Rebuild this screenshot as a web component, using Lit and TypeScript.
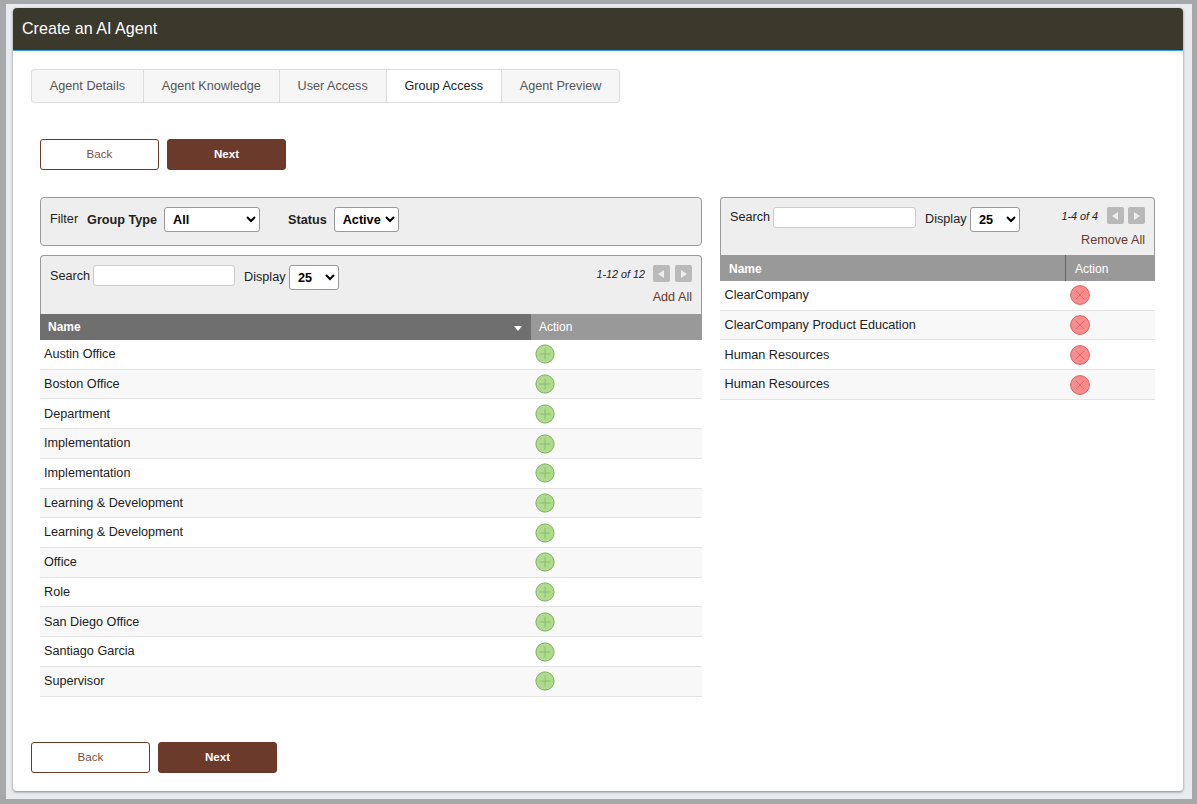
import { LitElement, html, css } from 'lit'
import { customElement, property } from 'lit/decorators.js'

const available = [
  'Austin Office',
  'Boston Office',
  'Department',
  'Implementation',
  'Implementation',
  'Learning & Development',
  'Learning & Development',
  'Office',
  'Role',
  'San Diego Office',
  'Santiago Garcia',
  'Supervisor'
]

const assigned = [
  'ClearCompany',
  'ClearCompany Product Education',
  'Human Resources',
  'Human Resources'
]

const tabs = ['Agent Details', 'Agent Knowledge', 'User Access', 'Group Access', 'Agent Preview']

const plusIcon = html`<svg width="20" height="20" viewBox="0 0 20 20">
  <circle cx="10" cy="10" r="9.1" fill="#aedb8c" stroke="#7dae62" />
  <path d="M10 4.6v10.8M4.6 10h10.8" stroke="#86b56a" stroke-width="0.8" fill="none" />
</svg>`

const crossIcon = html`<svg width="20" height="20" viewBox="0 0 20 20">
  <circle cx="10" cy="10" r="9.4" fill="#f98d8d" stroke="#d9605f" />
  <path d="M5.8 5.8l8.4 8.4M14.2 5.8l-8.4 8.4" stroke="#d9605f" stroke-width="0.8" fill="none" />
</svg>`

@customElement('group-panel')
export class GroupPanel extends LitElement {
  static styles = css`
    :host {
      display: block;
      font-family: 'Liberation Sans', Arial, sans-serif;
      font-size: 12.65px;
      color: #222;
    }
    .toolbar {
      display: flex;
      justify-content: space-between;
      box-sizing: border-box;
      padding: 9px 9px 0;
      background: #eeeeee;
      border: 1px solid #9a9a9a;
      border-bottom: none;
      border-radius: 4px 4px 0 0;
    }
    .controls {
      display: flex;
      align-items: flex-start;
    }
    .label {
      line-height: 22px;
      margin-right: 3px;
    }
    .remove .label {
      line-height: 20px;
    }
    .label.display,
    .remove .label.display {
      line-height: 25px;
      margin-left: 9px;
      margin-right: 3.5px;
    }
    input {
      box-sizing: border-box;
      width: 142px;
      height: 21px;
      border: 1px solid #ccc;
      border-radius: 3px;
      background: #fff;
      padding: 0 4px;
    }
    .remove input {
      width: 143px;
    }
    select {
      box-sizing: border-box;
      width: 50px;
      height: 25px;
      font: bold 12.65px 'Liberation Sans', Arial, sans-serif;
      color: #000;
      background: #fff;
      border: 1px solid #999;
      border-radius: 3px;
      padding-left: 4px;
    }
    .paging {
      display: flex;
      flex-direction: column;
      align-items: flex-end;
    }
    .pager {
      display: flex;
      align-items: center;
      height: 17px;
    }
    .count {
      font-size: 10.8px;
      font-style: italic;
      margin-right: 8px;
    }
    .remove .count {
      margin-right: 9px;
    }
    .page-btn {
      width: 17px;
      height: 17px;
      margin-left: 5px;
      border-radius: 2px;
      background: #b9b9b9;
      display: flex;
      align-items: center;
      justify-content: center;
    }
    .remove .page-btn {
      margin-left: 4px;
    }
    .page-btn.prev,
    .remove .page-btn.prev {
      margin-left: 0;
    }
    .bulk {
      margin-top: 7px;
      color: #6b3a2a;
      line-height: 17px;
    }
    .remove .bulk {
      margin-top: 8px;
    }
    .head {
      display: flex;
      height: 26px;
      line-height: 26px;
      color: #fff;
      font-size: 12px;
      font-weight: bold;
    }
    .remove .head {
      line-height: 28px;
    }
    .head div {
      box-sizing: border-box;
      padding-left: 8px;
      background: #999999;
    }
    .remove .head div {
      padding-left: 9px;
    }
    .head .name {
      flex: 1;
      position: relative;
    }
    .head .action {
      font-weight: normal;
    }
    .head .sorted {
      background: #6f6f6f;
    }
    .head .split {
      border-right: 1px solid #666;
    }
    .sort-arrow {
      position: absolute;
      right: 9px;
      top: 12px;
      width: 0;
      height: 0;
      border: 4px solid transparent;
      border-top: 5px solid #fff;
      border-bottom: none;
    }
    .row {
      display: flex;
      align-items: center;
      box-sizing: border-box;
      height: 29.72px;
      border-bottom: 1px solid #e3e3e3;
      background: #fff;
    }
    .row:nth-child(even) {
      background: #f8f8f8;
    }
    .row .cell {
      flex: 1;
      padding: 0 0 0.4px 4px;
    }
    .remove .row .cell {
      padding-left: 4.6px;
    }
    .row .act {
      box-sizing: border-box;
      padding: 0 0 0 4px;
      display: flex;
      align-items: center;
    }
  `

  @property({ type: Array }) items: string[] = []
  @property() mode = 'add'
  @property() countText = ''
  @property() bulkText = ''
  @property({ type: Number }) toolbarHeight = 59
  @property({ type: Number }) actionWidth = 171

  render () {
    const adding = this.mode === 'add'
    return html`
      <div class="${this.mode}">
        <div class="toolbar" style="height:${this.toolbarHeight}px">
          <div class="controls">
            <span class="label">Search</span>
            <input type="text" />
            <span class="label display">Display</span>
            <select><option>25</option></select>
          </div>
          <div class="paging">
            <div class="pager">
              <span class="count">${this.countText}</span>
              <span class="page-btn prev"><svg width="7" height="8" viewBox="0 0 7 8"><path d="M6 0v8L0 4z" fill="#eee" /></svg></span>
              <span class="page-btn"><svg width="7" height="8" viewBox="0 0 7 8"><path d="M1 0v8l6-4z" fill="#eee" /></svg></span>
            </div>
            <div class="bulk">${this.bulkText}</div>
          </div>
        </div>
        <div class="head">
          <div class="name ${adding ? 'sorted' : 'split'}">Name${adding ? html`<span class="sort-arrow"></span>` : ''}</div>
          <div class="action" style="width:${this.actionWidth}px">Action</div>
        </div>
        <div>
          ${this.items.map(item => html`
            <div class="row">
              <div class="cell">${item}</div>
              <div class="act" style="width:${this.actionWidth}px">${adding ? plusIcon : crossIcon}</div>
            </div>
          `)}
        </div>
      </div>
    `
  }
}

@customElement('app-root')
export class AppRoot extends LitElement {
  static styles = css`
    :host {
      display: block;
      height: 804px;
      box-sizing: border-box;
      padding: 4px 5px 5px 6px;
      background: #a6a8a9;
      font-family: 'Liberation Sans', Arial, sans-serif;
      font-size: 12.65px;
      color: #222;
    }
    .backdrop {
      box-sizing: border-box;
      height: 100%;
      padding: 4px 9px 8px 7px;
      background: #e8ecef;
    }
    .card {
      box-sizing: border-box;
      height: 100%;
      display: flex;
      flex-direction: column;
      background: #fff;
      border-radius: 4px;
      box-shadow: 0 1px 3px rgba(0, 0, 0, 0.45);
    }
    .title {
      box-sizing: border-box;
      height: 43px;
      line-height: 41px;
      padding-left: 9px;
      background: #3b382c;
      border-bottom: 1px solid #36a3dc;
      border-radius: 4px 4px 0 0;
      color: #fff;
      font-size: 16.1px;
    }
    .tabs {
      display: flex;
      align-self: flex-start;
      margin: 18px 0 0 18px;
      border: 1px solid #dcdcdc;
      border-radius: 3px;
      background: #f6f6f6;
    }
    .tab {
      box-sizing: border-box;
      height: 32px;
      line-height: 32px;
      padding: 0 17.85px;
      color: #555;
      border-left: 1px solid #dcdcdc;
    }
    .tab:first-child {
      border-left: none;
    }
    .tab.active {
      background: #fff;
      color: #222;
    }
    .buttons {
      display: flex;
      gap: 8px;
    }
    .top-buttons {
      margin: 36px 0 0 27px;
    }
    .bottom-buttons {
      margin: auto 0 18px 18px;
    }
    button {
      box-sizing: border-box;
      width: 119px;
      height: 31px;
      border: 1px solid #6c3a2b;
      border-radius: 3px;
      font: 11.6px 'Liberation Sans', Arial, sans-serif;
      padding: 0 0 2px;
    }
    .back {
      background: #fff;
      color: #7d4f41;
    }
    .next {
      background: #6c3a2b;
      color: #fff;
      font-weight: bold;
    }
    .columns {
      display: flex;
      align-items: flex-start;
      gap: 18px;
      margin: 27px 0 0 27px;
    }
    .left {
      width: 662px;
    }
    .right {
      width: 435px;
    }
    .filter {
      box-sizing: border-box;
      display: flex;
      align-items: flex-start;
      height: 49px;
      margin-bottom: 9px;
      padding: 9px 9px 0;
      background: #eeeeee;
      border: 1px solid #9a9a9a;
      border-radius: 4px;
    }
    .filter .word {
      line-height: 24px;
      margin-right: 9px;
    }
    .filter b {
      line-height: 26px;
      margin-right: 7px;
    }
    .filter b.second {
      margin-left: 28px;
    }
    .filter select {
      box-sizing: border-box;
      height: 25px;
      font: bold 12.65px 'Liberation Sans', Arial, sans-serif;
      color: #000;
      background: #fff;
      border: 1px solid #999;
      border-radius: 3px;
      padding-left: 4px;
    }
    .type-select {
      width: 96px;
    }
    .status-select {
      width: 65px;
    }
  `

  render () {
    return html`
      <div class="backdrop">
        <div class="card">
          <div class="title">Create an AI Agent</div>
          <div class="tabs">
            ${tabs.map(tab => html`<div class="tab ${tab === 'Group Access' ? 'active' : ''}">${tab}</div>`)}
          </div>
          <div class="buttons top-buttons">
            <button class="back">Back</button>
            <button class="next">Next</button>
          </div>
          <div class="columns">
            <div class="left">
              <div class="filter">
                <span class="word">Filter</span>
                <b>Group Type</b>
                <select class="type-select"><option>All</option></select>
                <b class="second">Status</b>
                <select class="status-select"><option>Active</option></select>
              </div>
              <group-panel
                .items=${available}
                mode="add"
                countText="1-12 of 12"
                bulkText="Add All"
                .toolbarHeight=${59}
                .actionWidth=${171}
              ></group-panel>
            </div>
            <div class="right">
              <group-panel
                .items=${assigned}
                mode="remove"
                countText="1-4 of 4"
                bulkText="Remove All"
                .toolbarHeight=${58}
                .actionWidth=${89}
              ></group-panel>
            </div>
          </div>
          <div class="buttons bottom-buttons">
            <button class="back">Back</button>
            <button class="next">Next</button>
          </div>
        </div>
      </div>
    `
  }
}
